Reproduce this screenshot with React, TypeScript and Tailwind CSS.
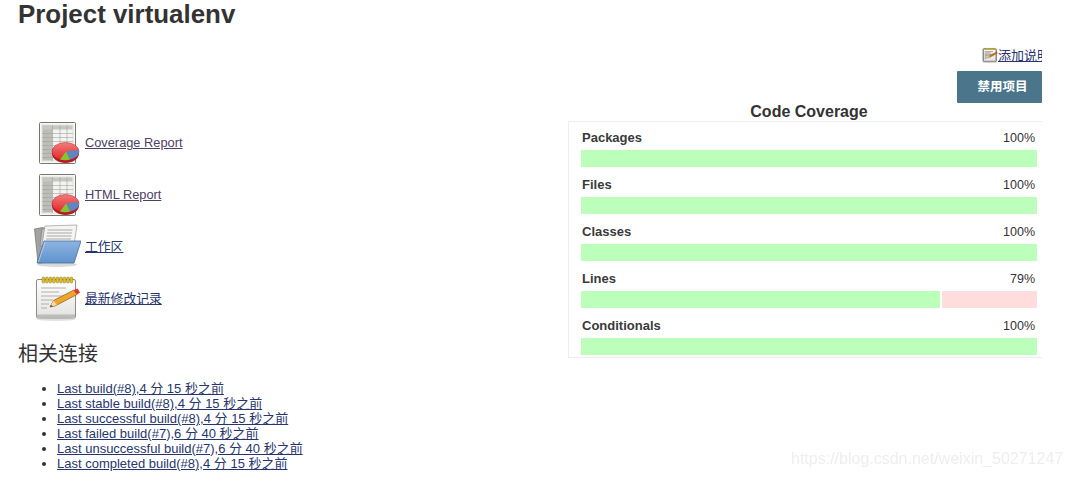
import React from "react";

const sans = "font-['Liberation_Sans','Noto_Sans_CJK_SC',sans-serif]";

function ReportIcon({ id }: { id: string }) {
  return (
    <svg width="48" height="48" viewBox="0 0 48 48" className="shrink-0">
      <defs>
        <linearGradient id={id + "r"} x1="0" y1="0" x2="0" y2="1">
          <stop offset="0" stopColor="#f47a7a" />
          <stop offset="1" stopColor="#e0262c" />
        </linearGradient>
      </defs>
      <rect x="6.500" y="4.500" width="36" height="41" rx="1" fill="#f8f8f6" stroke="#77776f" />
      <rect x="9" y="7" width="31" height="36" fill="#f3f3f1" stroke="#c8c8c4" strokeWidth="0.5" />
      <rect x="9.500" y="7.500" width="10" height="35" fill="#bcbcb8" />
      <rect x="9.500" y="7.500" width="30" height="4" fill="#c6c6c2" />
      <path
        d="M9 15.500h31M9 19.500h31M9 23.500h31M9 27.500h31M9 31.500h31M9 35.500h31M9 39.500h31M19.500 7v36M27 7v36M34 7v36"
        stroke="#a2a29e"
        strokeWidth="0.6"
        fill="none"
      />
      <path d="M19 33v2.500c0 5.500 6.500 9.500 13.500 9.500S46 41 46 35.500V33z" fill="#b51c22" />
      <ellipse cx="32.500" cy="33.500" rx="13.500" ry="9" fill={`url(#${id}r)`} stroke="#b51c22" strokeWidth="0.5" />
      <path d="M33 33.500L45.500 32c1 2.500.3 4.800-2.500 6.800-2 1.400-4 2.300-6 2.800z" fill="#5a88c4" />
      <path d="M33 33.500l4 8.100c-3 .7-7 .7-10 0z" fill="#84c52e" />
    </svg>
  );
}

function FolderIcon() {
  return (
    <svg width="48" height="48" viewBox="0 0 48 48" className="shrink-0">
      <defs>
        <linearGradient id="folderFront" x1="0" y1="0" x2="0" y2="1">
          <stop offset="0" stopColor="#8db4e0" />
          <stop offset="1" stopColor="#5f92cd" />
        </linearGradient>
      </defs>
      <ellipse cx="24" cy="42.500" rx="20" ry="2.500" fill="#000" opacity="0.15" />
      <path d="M1.500 7l8-1.500 3 1L9 41H5z" fill="#a2a2a0" stroke="#70706e" strokeWidth="0.7" />
      <path d="M9 7l31-3-1 20H7z" fill="#c4c4c2" stroke="#808080" strokeWidth="0.7" />
      <path d="M12 4l32-1-3 20H9z" fill="#f5f5f3" stroke="#8a8a88" strokeWidth="0.6" />
      <path d="M14.500 8h25M14 11h25M13.500 14h25M13 17h25" stroke="#a2a2a0" strokeWidth="0.9" />
      <path d="M11 19h37l-7 22H4z" fill="url(#folderFront)" stroke="#47709c" strokeWidth="0.8" />
      <path d="M5.500 40l6.500-20" stroke="#c6daf0" strokeWidth="0.7" fill="none" />
    </svg>
  );
}

function NotesIcon({ small = false }: { small?: boolean }) {
  const id = small ? "padSmall" : "padLarge";
  return (
    <svg width={small ? 16 : 48} height={small ? 16 : 48} viewBox="0 0 48 48" className="shrink-0">
      <defs>
        <linearGradient id={id} x1="0" y1="0" x2="0" y2="1">
          <stop offset="0" stopColor="#ffffff" />
          <stop offset="1" stopColor="#e2e2e0" />
        </linearGradient>
      </defs>
      <ellipse cx="23" cy="45.500" rx="19" ry="1.500" fill="#000" opacity="0.12" />
      <rect
        x="3.500"
        y="5.500"
        width="39"
        height="38.500"
        rx="1.500"
        fill={`url(#${id})`}
        stroke={small ? "#55554f" : "#8c8c8a"}
        strokeWidth={small ? 3 : 1}
      />
      <rect x="4" y="40.500" width="38" height="3" fill="#bcbcba" />
      {[9, 12.5, 16, 19.5, 23, 26.5, 30, 33.5, 37].map((x) => (
        <rect key={x} x={x} y="3" width="2.800" height="6" rx="1.400" fill="#dfbf30" stroke="#8a7410" strokeWidth="0.5" />
      ))}
      <path
        d="M8 14h25M8 18h18M8 22h24M8 26h12M8 30h8M8 34h6"
        stroke={small ? "#77776f" : "#a8a8a6"}
        strokeWidth={small ? 2 : 0.9}
      />
      <path
        d="M17 33l3.500-6.500L41 16l3 4.500L22 32z"
        fill={small ? "#b8741c" : "#eda52b"}
        stroke="#8f5c10"
        strokeWidth="0.7"
      />
      <path d="M17 33l3.500-6.500L24 31z" fill="#f2d9a8" />
      <path d="M17 33l1-2 1.800 1.300z" fill="#333" />
      <path d="M41 16l3.500-1.500 2.500 4-3 2z" fill="#e3342f" />
    </svg>
  );
}

const sideLinks = [
  { label: "Coverage Report", visited: true, icon: <ReportIcon id="a" /> },
  { label: "HTML Report", visited: true, icon: <ReportIcon id="b" /> },
  { label: "工作区", visited: false, icon: <FolderIcon /> },
  { label: "最新修改记录", visited: false, icon: <NotesIcon /> },
];

const builds = [
  "Last build(#8),4 分 15 秒之前",
  "Last stable build(#8),4 分 15 秒之前",
  "Last successful build(#8),4 分 15 秒之前",
  "Last failed build(#7),6 分 40 秒之前",
  "Last unsuccessful build(#7),6 分 40 秒之前",
  "Last completed build(#8),4 分 15 秒之前",
];

const coverage = [
  { name: "Packages", pct: 100 },
  { name: "Files", pct: 100 },
  { name: "Classes", pct: 100 },
  { name: "Lines", pct: 79 },
  { name: "Conditionals", pct: 100 },
];

export default function App() {
  return (
    <div className={`relative w-[1072px] h-[478px] overflow-hidden bg-white text-[#333] ${sans}`}>
      <div className="w-[1042px] overflow-hidden">
        <h1 className="pl-[18px] h-[47px] text-[25.9px] leading-[28px] font-bold">Project virtualenv</h1>

        <div className="flex justify-end -mr-2 h-[24px] items-start">
          <NotesIcon small />
          <a className="text-[13px] leading-[18px] underline text-[#27356e]" href="#">
            添加说明
          </a>
        </div>

        <div className="flex justify-end">
          <button className="w-[85px] h-[32px] pl-[6px] bg-[#4b758b] text-white text-[12.5px] font-bold rounded-[1px]">
            禁用项目
          </button>
        </div>

        <div className="flex">
          <div className="w-[568px] shrink-0 pl-[18px] pt-[15px]">
            {sideLinks.map((l) => (
              <div key={l.label} className="flex items-center gap-[4px] ml-[15px] h-[48px] mb-[4px]">
                {l.icon}
                <a
                  href="#"
                  className={`pt-[2px] text-[12.8px] underline ${l.visited ? "text-[#4d4163]" : "text-[#27356e]"}`}
                >
                  {l.label}
                </a>
              </div>
            ))}
            <h2 className="mt-[18px] text-[20px] leading-[28px] font-normal">相关连接</h2>
            <ul className="mt-[13px] pl-[39px] list-disc text-[13px] leading-[15px] marker:text-[#333]">
              {builds.map((b) => (
                <li key={b}>
                  <a href="#" className="underline text-[#27356e]">
                    {b}
                  </a>
                </li>
              ))}
            </ul>
          </div>

          <div className="flex-1">
            <div className="h-[18px] pl-[8px] text-center text-[16px] leading-[18px] font-bold">
              Code Coverage
            </div>
            <div className="border border-r-0 border-[#eeeeee] pl-[12px] pr-[4px] pt-[6px] pb-[2px] w-[474px]">
              {coverage.map((c, i) => (
                <div key={c.name} className={i < coverage.length - 1 ? "mb-[8px]" : ""}>
                  <div className="flex justify-between pl-[1px] pr-[2px] pt-[1px] mb-[3px] text-[13px] leading-[18px]">
                    <b className="font-bold text-[#3a3a3a]">{c.name}</b>
                    <span className="pr-[1px] text-[12.5px]">{c.pct}%</span>
                  </div>
                  <div className="flex h-[17px] w-[456px] gap-[2px]">
                    <div className="h-full bg-[#bbffbb]" style={{ width: c.pct === 100 ? "100%" : "359px" }} />
                    {c.pct < 100 && <div className="h-full flex-1 bg-[#ffdddd]" />}
                  </div>
                </div>
              ))}
            </div>
          </div>
        </div>
      </div>

      <div className="absolute left-[791px] top-[450px] text-[16px] leading-[18px] text-[#eeeeee] whitespace-nowrap blur-[0.3px]">
        https://blog.csdn.net/weixin_50271247
      </div>
    </div>
  );
}
